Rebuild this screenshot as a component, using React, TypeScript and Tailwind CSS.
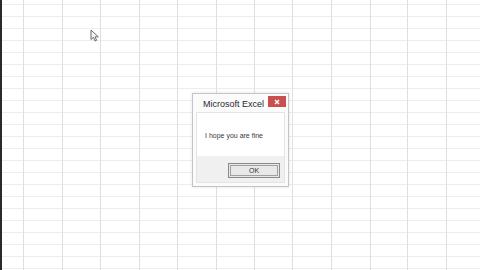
const COLS = [24, 39, 38, 39, 38, 39, 38, 38, 39, 39, 37, 39, 33];
const ROWS = 23;

function Sheet() {
  return (
    <div className="flex h-full w-full">
      <div className="w-[2px] shrink-0 bg-[#2a2a2a]" />
      {COLS.map((w, i) => (
        <div
          key={i}
          className={
            i === COLS.length - 1
              ? "flex flex-col shrink-0 grow"
              : "flex flex-col shrink-0 border-r border-[#e0e0e0]"
          }
          style={{ width: i === 0 ? w - 2 : w }}
        >
          <div className="h-[5px] shrink-0 border-b border-[#ededed]" />
          {Array.from({ length: ROWS }).map((_, r) => (
            <div key={r} className="h-[12px] shrink-0 border-b border-[#ededed]" />
          ))}
        </div>
      ))}
    </div>
  );
}

function Cursor() {
  return (
    <svg className="absolute left-[90px] top-[29px]" width="10" height="13" viewBox="0 0 10 13">
      <path
        d="M1 1 L1 10.5 L3.4 8.4 L5 12 L6.6 11.3 L5.1 7.8 L8.3 7.8 Z"
        fill="#f4f4f4"
        stroke="#6a6a6a"
        strokeWidth="1"
        strokeLinejoin="round"
      />
    </svg>
  );
}

function MsgBox() {
  return (
    <div className="absolute left-[192px] top-[93px] w-[97px] h-[94px] flex flex-col bg-[#fbfbfb] border border-[#c4c4c4] shadow-[0_0_3px_rgba(0,0,0,0.12)]">
      <div className="h-[18px] flex items-start justify-between pl-[10px] pr-[2px]">
        <span className="mt-[6px] text-[9px] leading-none text-[#2a2a2a] font-['Liberation_Sans',sans-serif]">
          Microsoft Excel
        </span>
        <div className="w-[18px] h-[11px] mt-[2px] bg-[#c9504f] flex items-center justify-center">
          <svg width="6" height="6" viewBox="0 0 6 6">
            <path d="M1 1 L5 5 M5 1 L1 5" stroke="#fff" strokeWidth="1.4" />
          </svg>
        </div>
      </div>
      <div className="mx-[3px] mb-[3px] grow flex flex-col border border-[#e4e4e4]">
        <div className="h-[43px] bg-white flex items-center pl-[8px] pt-[2px]">
          <span className="text-[7px] leading-none text-[#3a3a3a] font-['Liberation_Sans',sans-serif]">
            I hope you are fine
          </span>
        </div>
        <div className="grow bg-[#f0f0f0] flex items-start justify-end pr-[4px] pt-[7px]">
          <div className="w-[52px] h-[15px] border border-[#8a8a8a] bg-[#e8e8e8] p-[1px]">
            <div className="w-full h-full border border-[#a0a0a0] flex items-center justify-center">
              <span className="text-[7px] leading-none text-[#333] font-['Liberation_Sans',sans-serif]">
                OK
              </span>
            </div>
          </div>
        </div>
      </div>
    </div>
  );
}

export default function App() {
  return (
    <div className="relative w-[480px] h-[270px] overflow-hidden bg-white">
      <Sheet />
      <Cursor />
      <MsgBox />
    </div>
  );
}
